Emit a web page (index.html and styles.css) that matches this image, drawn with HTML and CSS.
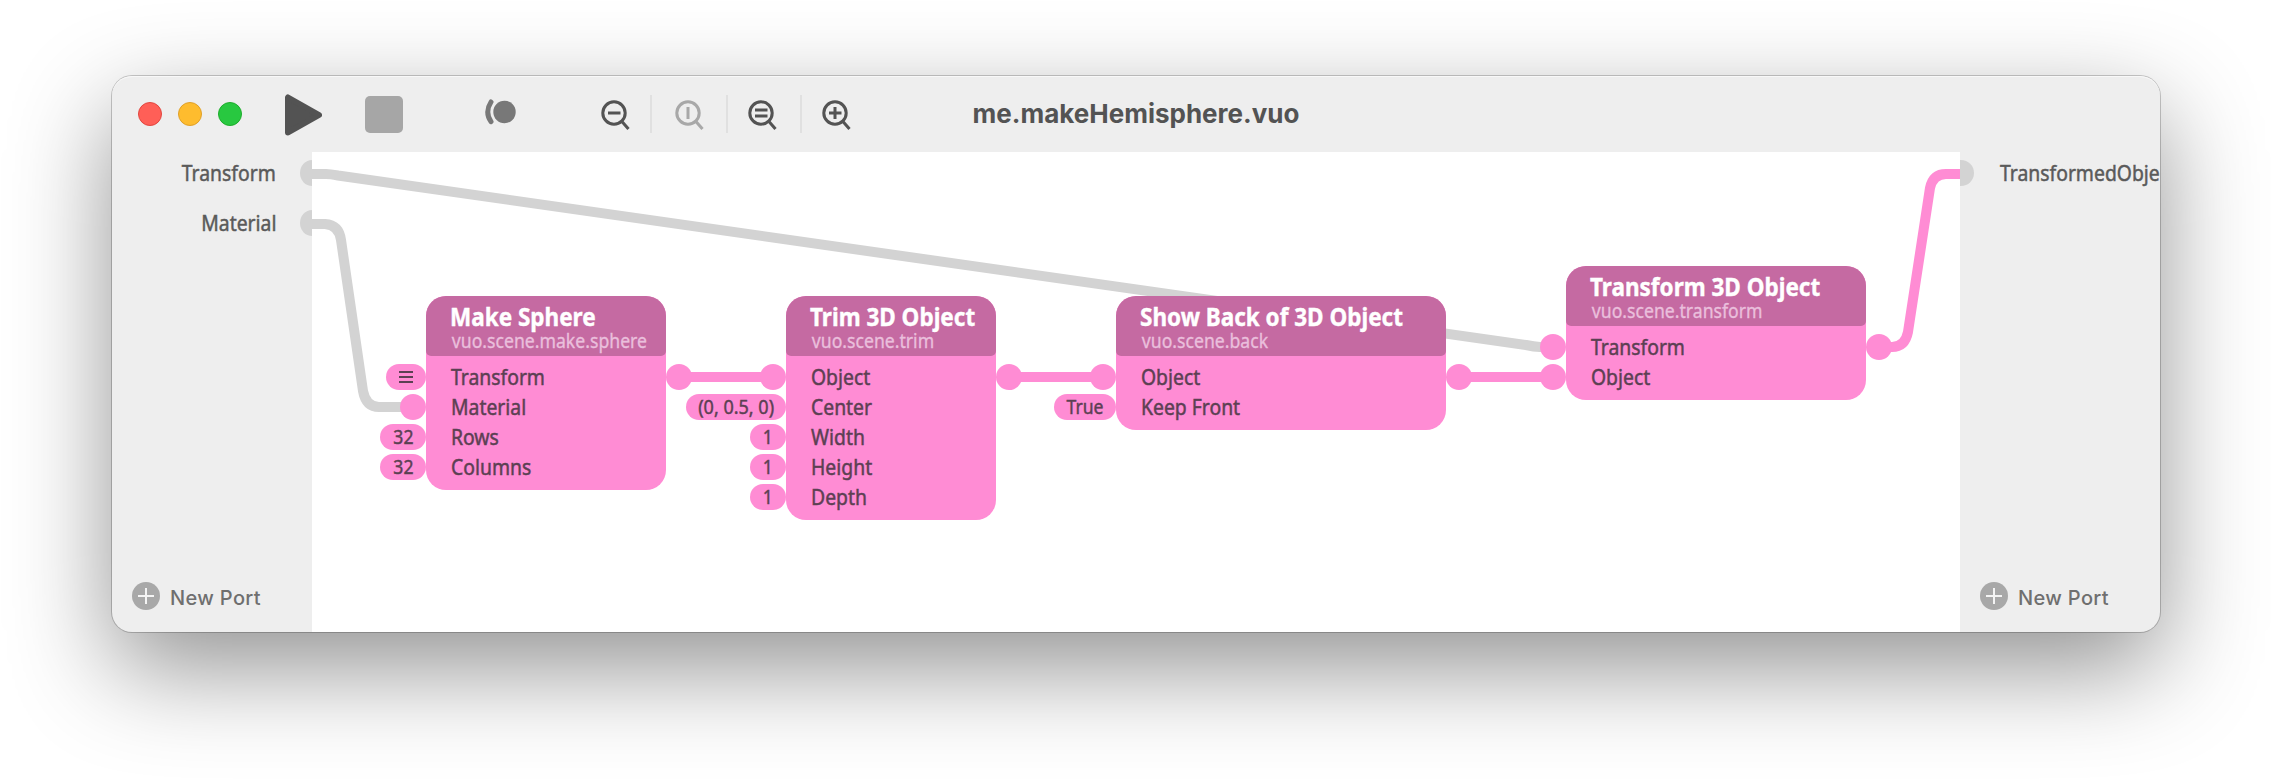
FILE: index.html
```html
<!DOCTYPE html>
<html lang="en">
<head>
<meta charset="utf-8">
<title>me.makeHemisphere.vuo</title>
<link rel="stylesheet" href="styles.css">
</head>
<body>
<main class="window">
  <header class="toolbar">
    <div class="tools">
      <div class="lights"><i class="light red"></i><i class="light yellow"></i><i class="light green"></i></div>
      <svg class="play" width="38" height="44" viewBox="0 0 38 44"><path d="M4 4.500V39.500L35 22Z" fill="#535353" stroke="#535353" stroke-width="6" stroke-linejoin="round"/></svg>
      <i class="stop"></i>
      <svg class="events" width="32" height="28" viewBox="0 0 32 28"><circle cx="20.500" cy="13" r="11.200" fill="#787878"/><path d="M7 3Q0.500 13 7 22.700" fill="none" stroke="#787878" stroke-width="5" stroke-linecap="round"/></svg>
      <svg class="zoom" viewBox="0 0 30 32"><circle cx="14" cy="14" r="11.200"/><path d="M21.500 22L28.500 30M8 14H20.500"/></svg>
      <i class="divider"></i>
      <svg class="zoom dim" viewBox="0 0 30 32"><circle cx="14" cy="14" r="11.200"/><path d="M21.500 22L28.500 30M14 8V20"/></svg>
      <i class="divider"></i>
      <svg class="zoom" viewBox="0 0 30 32"><circle cx="14" cy="14" r="11.200"/><path d="M21.500 22L28.500 30M8 11H20.500M8 17H20.500"/></svg>
      <i class="divider"></i>
      <svg class="zoom" viewBox="0 0 30 32"><circle cx="14" cy="14" r="11.200"/><path d="M21.500 22L28.500 30M8 14H20.500M14 8V20"/></svg>
    </div>
    <h1 class="title">me.makeHemisphere.vuo</h1>
  </header>
  <div class="body">
    <aside class="side inputs">
      <ul class="published">
        <li><span class="label">Transform</span><i class="half"></i></li>
        <li><span class="label">Material</span><i class="half"></i></li>
      </ul>
      <button class="new"><svg width="28" height="28" viewBox="0 0 28 28"><circle cx="14" cy="14" r="14"/><path d="M14 6V22M6 14H22"/></svg><span>New Port</span></button>
    </aside>
    <section class="canvas">
      <svg class="cables" viewBox="312 152 1648 480">
        <path class="gray" d="M312 174H326Q330 174 338 175.500L1526 345Q1534 346.700 1540 347H1553"/>
        <path class="gray" d="M312 224H325Q339 225 341 240L363 391Q366 407 379 407H413"/>
        <path d="M679 377H773M1009 377H1103M1459 377H1553"/>
        <path d="M1879 347H1892Q1905 347 1908 332L1930 188Q1933 174 1946 174H1960"/>
      </svg>
      <article class="node make">
        <header><h2>Make Sphere</h2><p>vuo.scene.make.sphere</p></header>
        <ul>
          <li><b class="pill list"><svg width="14" height="12" viewBox="0 0 14 12"><path d="M0 1H14M0 6H14M0 11H14"/></svg></b><span class="label">Transform</span><i class="port out"></i></li>
          <li><i class="port"></i><span class="label">Material</span></li>
          <li><b class="pill two"><span>32</span></b><span class="label">Rows</span></li>
          <li><b class="pill two"><span>32</span></b><span class="label">Columns</span></li>
        </ul>
      </article>
      <article class="node trim">
        <header><h2>Trim 3D Object</h2><p>vuo.scene.trim</p></header>
        <ul>
          <li><i class="port"></i><span class="label">Object</span><i class="port out"></i></li>
          <li><b class="pill point"><span>(0, 0.5, 0)</span></b><span class="label">Center</span></li>
          <li><b class="pill one"><span>1</span></b><span class="label">Width</span></li>
          <li><b class="pill one"><span>1</span></b><span class="label">Height</span></li>
          <li><b class="pill one"><span>1</span></b><span class="label">Depth</span></li>
        </ul>
      </article>
      <article class="node back">
        <header><h2>Show Back of 3D Object</h2><p>vuo.scene.back</p></header>
        <ul>
          <li><i class="port"></i><span class="label">Object</span><i class="port out"></i></li>
          <li><b class="pill bool"><span>True</span></b><span class="label">Keep Front</span></li>
        </ul>
      </article>
      <article class="node xform">
        <header><h2>Transform 3D Object</h2><p>vuo.scene.transform</p></header>
        <ul>
          <li><i class="port"></i><span class="label">Transform</span><i class="port out"></i></li>
          <li><i class="port"></i><span class="label">Object</span></li>
        </ul>
      </article>
    </section>
    <aside class="side outputs">
      <ul class="published">
        <li><i class="half"></i><span class="label">TransformedObject</span></li>
      </ul>
      <button class="new"><svg width="28" height="28" viewBox="0 0 28 28"><circle cx="14" cy="14" r="14"/><path d="M14 6V22M6 14H22"/></svg><span>New Port</span></button>
    </aside>
  </div>
</main>
</body>
</html>
```
FILE: styles.css
```css
* { box-sizing: border-box; margin: 0; padding: 0; }
body { background: #fff; padding: 76px 112px 0; height: 780px; overflow: hidden; font-family: "Noto Sans", sans-serif; }
ul { list-style: none; }
i, b { font-style: normal; font-weight: normal; }
svg { display: block; flex: none; }

.window { width: 2048px; height: 556px; border-radius: 20px; background: #eee;
  box-shadow: 0 0 0 1px rgba(0,0,0,.2), 0 36px 100px rgba(0,0,0,.43); }
.toolbar { height: 76px; display: grid; grid-template-columns: 1fr auto 1fr; align-items: center; border-radius: 20px 20px 0 0; box-shadow: inset 0 1px 0 #f8f8f8; }
.tools { display: flex; align-items: center; padding-left: 26px; width: 0; }
.lights { display: flex; gap: 16px; flex: none; }
.light { width: 24px; height: 24px; border-radius: 50%; border: 1px solid; }
.red { background: #ff5f57; border-color: #e2463f; }
.yellow { background: #febc2e; border-color: #e0a028; }
.green { background: #28c840; border-color: #1dad2b; }
.play { margin: 1px 0 0 42px; }
.stop { flex: none; width: 38px; height: 37px; border-radius: 5px; background: #a6a6a6; margin: 0 0 0 43px; }
.events { margin: -2px 84px 0 81px; }
.zoom { width: 30px; height: 32px; margin-top: 2px; fill: none; stroke: #535353; stroke-width: 3px; }
.dim { stroke: #a8a8a8; }
.divider { flex: none; width: 2px; height: 38px; background: #e0e0e0; margin: 0 22px 0 20px; }
.dim + .divider { margin: 0 19px 0 22px; }
.dim + .divider + .zoom + .divider { margin: 0 19px 0 23px; }
.title { font: 700 26px/38px Inter, sans-serif; color: #535353; white-space: nowrap; }

.body { display: grid; grid-template-columns: 200px 1648px 200px; height: 480px; }
.side { display: flex; flex-direction: column; justify-content: space-between; overflow: hidden; border-radius: 0 0 20px 20px; }
.published li { height: 50px; display: flex; align-items: center; }
.published { margin-top: -4px; }
.inputs li { justify-content: flex-end; }
.half { flex: none; width: 12px; height: 26px; background: #d3d3d3; border-radius: 12px 0 0 12px / 13px 0 0 13px; }
.inputs .half { margin-left: 24px; }
.outputs .half { width: 14px; margin-right: 26px; border-radius: 0 13px 13px 0; }
.label { display: block; width: max-content; font-size: 22px; line-height: 30px; margin-top: -1px; color: #5a5a5a; white-space: nowrap; -webkit-text-stroke: .5px currentColor; transform: scaleX(.88); transform-origin: left; }
.side .label { margin-top: -2px; }
.inputs .label { transform-origin: right; }
.new { display: flex; align-items: center; gap: 10px; border: 0; background: none; height: 28px; margin: 0 0 22px 20px; font: 500 20px/28px Inter, sans-serif; letter-spacing: .35px; color: #6f6f6f; white-space: nowrap; }
.new span { padding-top: 3px; }
.new svg { fill: #a8a8a8; stroke: #f4f4f4; stroke-width: 2px; }
.new circle { stroke: none; }

.canvas { position: relative; background: #fff; }
.cables { width: 1648px; height: 480px; fill: none; stroke: #ff8cd4; stroke-width: 10px; }
.gray { stroke: #d3d3d3; }
.node { position: absolute; background: #ff8cd4; border-radius: 20px; }
.make { left: 114px; top: 144px; width: 240px; height: 194px; }
.trim { left: 474px; top: 144px; width: 210px; height: 224px; }
.back { left: 804px; top: 144px; width: 330px; height: 134px; }
.xform { left: 1254px; top: 114px; width: 300px; height: 134px; }
.node header { height: 60px; padding: 7px 0 0 24px; background: #c56aa2; border-radius: 20px 20px 5px 5px; white-space: nowrap; margin-bottom: 6px; }
.node h2 { width: max-content; font-size: 25px; line-height: 26px; font-weight: 700; color: #fff; -webkit-text-stroke: .4px currentColor; transform: scaleX(.9); transform-origin: left; }
.node header p { width: max-content; padding-left: 2px; font-size: 20px; line-height: 24px; color: #eabfdc; -webkit-text-stroke: .35px currentColor; transform: scaleX(.882); transform-origin: left; }
.node li { position: relative; height: 30px; padding: .05px 0 0 25px; }
.node .label { color: #5c4053; }
.port, .pill { position: absolute; top: 2px; right: 100%; height: 26px; background: #ff8cd4; border-radius: 13px; }
.port { width: 26px; }
.out { right: auto; left: 100%; }
.pill { display: flex; align-items: center; justify-content: center; font-size: 20px; line-height: 26px; color: #5c4053; white-space: nowrap; -webkit-text-stroke: .45px currentColor; }
.pill span { margin: -1px 0 0 0; transform: scaleX(.88); }
.point span { transform: scaleX(.9); }
.list { width: 40px; }
.list svg { stroke: #5c4053; stroke-width: 2px; }
.two { width: 46px; }
.one { width: 36px; }
.point { width: 100px; }
.bool { width: 62px; }
```
